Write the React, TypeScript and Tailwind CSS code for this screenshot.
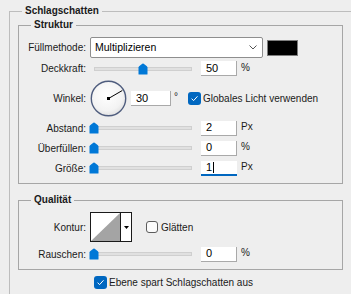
import React from "react";

interface SliderRow {
  label: string;
  value: string;
  unit: string;
  pct: number;
  focused?: boolean;
}

const LOWER_ROWS: SliderRow[] = [
  { label: "Abstand:", value: "2", unit: "Px", pct: 0 },
  { label: "Überfüllen:", value: "0", unit: "%", pct: 0 },
  { label: "Größe:", value: "1", unit: "Px", pct: 0, focused: true },
];

function Slider({ pct }: { pct: number }) {
  return (
    <div className="relative flex h-full w-[108px] items-center px-[5px]">
      <div className="h-[4px] w-full border border-[#cfcfcf] bg-[#e0e0e0]" />
      <svg
        className="absolute top-[calc(50%-6px)]"
        style={{ left: Math.round(pct * 98) }}
        width="10"
        height="12"
        viewBox="0 0 10 12"
      >
        <path
          d="M0.5 4.6 Q0.5 3.9 1.1 3.3 L4.3 0.7 Q5 0.2 5.7 0.7 L8.9 3.3 Q9.5 3.9 9.5 4.6 V11 Q9.5 11.5 9 11.5 H1 Q0.5 11.5 0.5 11 Z"
          fill="#0078d7"
        />
      </svg>
    </div>
  );
}

function NumInput({
  value,
  focused,
  wide,
}: {
  value: string;
  focused?: boolean;
  wide?: boolean;
}) {
  return (
    <div
      className={`flex h-[15px] items-center bg-white pl-[5px] text-[11px] text-black ${
        wide ? "w-[40px]" : "w-[36px]"
      } ${
        focused
          ? "border-b-2 border-[#0067c0]"
          : "border-r border-b border-[#a9a9a9]"
      }`}
    >
      {value}
      {focused && <span className="ml-[1px] h-[11px] w-px bg-black" />}
    </div>
  );
}

function Checked() {
  return (
    <span className="flex h-[13px] w-[13px] shrink-0 items-center justify-center rounded-[3px] bg-[#0067c0]">
      <svg width="9" height="9" viewBox="0 0 9 9">
        <path
          d="M1.6 4.7 L3.6 6.6 L7.5 2.3"
          fill="none"
          stroke="#ffffff"
          strokeWidth="1"
        />
      </svg>
    </span>
  );
}

function Label({ children }: { children: React.ReactNode }) {
  return <span className="w-[67px] shrink-0 text-right">{children}</span>;
}

function Dial() {
  return (
    <svg width="37" height="37" viewBox="0 0 37 37">
      <defs>
        <radialGradient id="dialFill" cx="45%" cy="40%" r="65%">
          <stop offset="0" stopColor="#ffffff" />
          <stop offset="0.7" stopColor="#f3f3f3" />
          <stop offset="1" stopColor="#dedede" />
        </radialGradient>
      </defs>
      <circle cx="18.5" cy="18.5" r="17.2" fill="url(#dialFill)" stroke="#4f5d7e" strokeWidth="1.4" />
      <line x1="18.5" y1="18.5" x2="32.3" y2="10.5" stroke="#000000" strokeWidth="1" />
      <rect x="17" y="17" width="3" height="3" fill="#000000" />
    </svg>
  );
}

export default function App() {
  return (
    <div className="h-[294px] w-[351px] overflow-hidden bg-[#eeeeee] pt-[4px] font-['Liberation_Sans',Arial,sans-serif] text-[10px] text-[#1a1a1a]">
      <fieldset className="ml-[9px] w-[360px] border border-[#bdbdbd] pb-[20px]">
        <legend className="ml-[12px] px-[3px] leading-[14px] font-bold">
          Schlagschatten
        </legend>
        <div className="pl-[8px]">
          {/* Struktur */}
          <fieldset className="w-[325px] border border-[#a6a6a6]">
            <legend className="ml-[12px] px-[3px] leading-[14px] font-bold">
              Struktur
            </legend>
            <div className="flex flex-col pt-[5px] pb-[5px]">
              <div className="flex h-[21px] items-center">
                <Label>Füllmethode:</Label>
                <div className="ml-[4px] flex h-[21px] w-[173px] items-center justify-between rounded-[2px] border border-[#8e8e8e] bg-white pr-[5px] pl-[4px] text-[10.5px] text-black">
                  Multiplizieren
                  <svg width="8" height="5" viewBox="0 0 8 5">
                    <polyline points="0.5,0.5 4,4 7.5,0.5" fill="none" stroke="#555555" strokeWidth="1" />
                  </svg>
                </div>
                <div className="ml-[4px] h-[16px] w-[31px] border border-[#7d7d7d] bg-black" />
              </div>

              <div className="flex h-[21px] items-center">
                <Label>Deckkraft:</Label>
                <div className="ml-[3px] h-full">
                  <Slider pct={0.5} />
                </div>
                <div className="ml-[4px]">
                  <NumInput value="50" />
                </div>
                <span className="mb-[3px] ml-[4px]">%</span>
              </div>

              <div className="flex h-[39px] items-center">
                <Label>Winkel:</Label>
                <div className="ml-[4px] flex">
                  <Dial />
                </div>
                <div className="ml-[4px]">
                  <NumInput value="30" wide />
                </div>
                <span className="mb-[4px] ml-[3px]">°</span>
                <span className="ml-[10px]">
                  <Checked />
                </span>
                <span className="ml-[2px]">Globales Licht verwenden</span>
              </div>

              {LOWER_ROWS.map((row) => (
                <div key={row.label} className="flex h-[20px] items-center">
                  <Label>{row.label}</Label>
                  <div className="ml-[3px] h-full">
                    <Slider pct={row.pct} />
                  </div>
                  <div className="ml-[4px]">
                    <NumInput value={row.value} focused={row.focused} />
                  </div>
                  <span className="mb-[3px] ml-[4px]">{row.unit}</span>
                </div>
              ))}
            </div>
          </fieldset>

          {/* Qualität */}
          <fieldset className="mt-[9px] w-[325px] border border-[#a6a6a6]">
            <legend className="ml-[12px] px-[3px] leading-[14px] font-bold">
              Qualität
            </legend>
            <div className="flex flex-col pt-[5px] pb-[5px]">
              <div className="flex h-[30px] items-center">
                <Label>Kontur:</Label>
                <div className="ml-[4px] flex h-[30px] w-[42px] border border-[#1a1a1a] bg-white">
                  <svg width="29" height="28" viewBox="0 0 29 28">
                    <rect width="29" height="28" fill="#ffffff" />
                    <polygon points="0,28 29,0 29,28" fill="#a4a4a4" />
                  </svg>
                  <div className="w-px bg-[#1a1a1a]" />
                  <div className="flex flex-1 items-center justify-center">
                    <svg width="5" height="3" viewBox="0 0 5 3">
                      <polygon points="0,0 5,0 2.5,3" fill="#000000" />
                    </svg>
                  </div>
                </div>
                <span className="ml-[14px] h-[12px] w-[12px] rounded-[3px] border border-[#5c5c5c] bg-[#fbfbfb]" />
                <span className="ml-[3px]">Glätten</span>
              </div>

              <div className="mt-[2px] flex h-[20px] items-center">
                <Label>Rauschen:</Label>
                <div className="ml-[3px] h-full">
                  <Slider pct={0} />
                </div>
                <div className="ml-[4px]">
                  <NumInput value="0" />
                </div>
                <span className="mb-[3px] ml-[4px]">%</span>
              </div>
            </div>
          </fieldset>

          <div className="mt-[6px] flex h-[13px] items-center">
            <span className="ml-[76px]">
              <Checked />
            </span>
            <span className="ml-[2px]">Ebene spart Schlagschatten aus</span>
          </div>
        </div>
      </fieldset>
    </div>
  );
}
